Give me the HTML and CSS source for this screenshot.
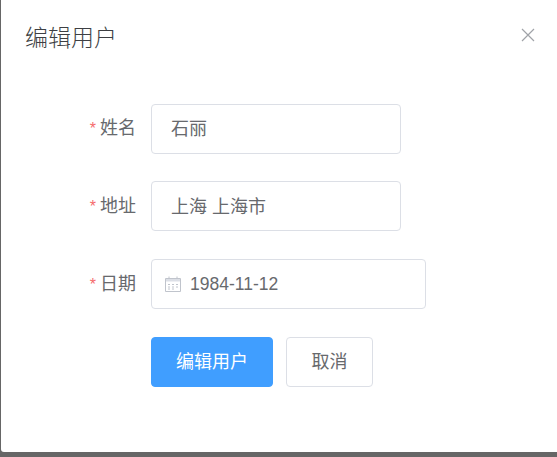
FILE: index.html
```html
<!DOCTYPE html>
<html lang="zh-CN">
<head>
    <meta charset="UTF-8">
    <title>编辑用户</title>
    <link rel="stylesheet" href="styles.css">
</head>
<body>
    <div class="dialog">
        <div class="dialog-header">
            <span class="dialog-title">编辑用户</span>
            <button class="dialog-close" aria-label="关闭">
                <svg width="14" height="14" viewBox="0 0 14 14">
                    <path d="M1 1 L13 13 M13 1 L1 13" stroke="#a0a3a8" stroke-width="1.2" fill="none"/>
                </svg>
            </button>
        </div>
        <form class="user-form">
            <div class="form-row">
                <label class="form-label"><i>*</i>姓名</label>
                <input class="form-input" type="text" value="石丽">
            </div>
            <div class="form-row">
                <label class="form-label"><i>*</i>地址</label>
                <input class="form-input" type="text" value="上海 上海市">
            </div>
            <div class="form-row">
                <label class="form-label"><i>*</i>日期</label>
                <div class="date-input">
                    <svg class="date-icon" width="16" height="16" viewBox="0 0 16 16">
                        <path d="M0.5 2.5 H15.5 V15.5 H0.5 Z" stroke="#c0c4cc" fill="none"/>
                        <path d="M1 3 H15 V5.5 H1 Z" fill="#dcdfe6"/>
                        <path d="M4 0.5 V3 M12 0.5 V3" stroke="#c0c4cc" fill="none"/>
                        <path d="M3 8.5 H5 M7 8.5 H9 M11 8.5 H13 M3 11 H5 M7 11 H9 M11 11 H13 M3 13 H5 M7 13 H9" stroke="#c0c4cc" fill="none"/>
                    </svg>
                    <span>1984-11-12</span>
                </div>
            </div>
            <div class="form-actions">
                <button type="button" class="btn btn-primary">编辑用户</button>
                <button type="button" class="btn">取消</button>
            </div>
        </form>
    </div>
</body>
</html>
```

FILE: styles.css
```css
body {
    margin: 0;
    height: 457px;
    overflow: hidden;
    background: #666;
    font-family: "Liberation Sans", "Noto Sans CJK SC", sans-serif;
}

.dialog {
    box-sizing: border-box;
    height: 452px;
    margin-left: 1px;
    background: #fff;
    border-radius: 0 0 0 3px;
}

.dialog-header {
    display: flex;
    justify-content: space-between;
    align-items: flex-start;
    height: 103.7px;
    box-sizing: border-box;
    padding: 25px 22px 0 24px;
}

.dialog-title {
    font-size: 23px;
    line-height: 26px;
    font-weight: 300;
    color: #3d3f43;
}

.dialog-close {
    padding: 0;
    margin-top: 3px;
    border: none;
    background: none;
    line-height: 0;
}

.user-form {
    padding-left: 150px;
}

.form-row {
    display: flex;
    align-items: center;
    height: 50px;
    margin-bottom: 27.7px;
    position: relative;
}

.form-label {
    position: absolute;
    right: 100%;
    padding-right: 15px;
    white-space: nowrap;
    font-size: 18px;
    line-height: 50px;
    color: #67696d;
}

.form-label i {
    margin-right: 4px;
    font-style: normal;
    font-size: 16px;
    color: #f56c6c;
}

.form-input {
    box-sizing: border-box;
    width: 250px;
    height: 50px;
    padding: 0 19px 3px;
    border: 1px solid #dcdfe6;
    border-radius: 4px;
    outline: none;
    font: inherit;
    font-size: 18px;
    color: #67696d;
}

.date-input {
    box-sizing: border-box;
    display: flex;
    align-items: center;
    width: 275px;
    height: 50px;
    padding-left: 13px;
    border: 1px solid #dcdfe6;
    border-radius: 4px;
    font-size: 17.5px;
    color: #67696d;
}

.date-icon {
    margin-right: 9px;
}

.form-actions {
    display: flex;
    gap: 13px;
}

.btn {
    box-sizing: border-box;
    width: 87px;
    height: 50px;
    padding: 0 0 3px;
    border: 1px solid #dcdfe6;
    border-radius: 4px;
    background: #fff;
    font: inherit;
    font-size: 18px;
    color: #67696d;
}

.btn-primary {
    width: 122px;
    border-color: #409eff;
    background: #409eff;
    color: #fff;
}
```
